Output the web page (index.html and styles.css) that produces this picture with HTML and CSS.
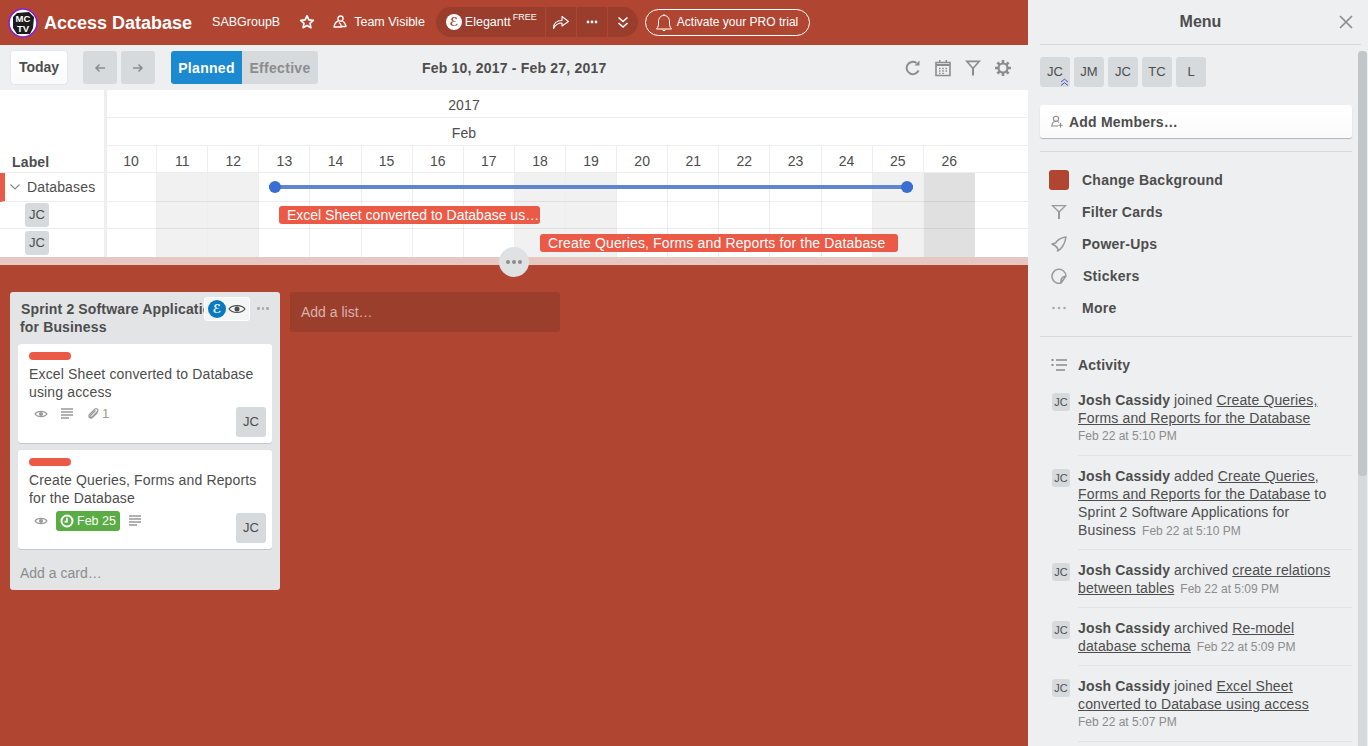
FILE: index.html
```html
<!DOCTYPE html>
<html lang="en">
<head>
  <meta charset="UTF-8" />
  <title>Access Database</title>
  <link rel="stylesheet" href="styles.css">
</head>
<body>
<div class="page">
  <div class="main">

    <div class="header">
      <svg class="logo" width="30" height="30" viewBox="0 0 30 30">
        <circle cx="15" cy="15" r="14" fill="#fff" stroke="#8a1fd8" stroke-width="1.6"/>
        <path d="M5 9 L9 5 L21 4 L26 9 L25 20 L22 26 L9 26 L5 20 Z" fill="#1c1c1c"/>
        <text x="15" y="14" class="logo-text">MC</text>
        <text x="15" y="24" class="logo-text">TV</text>
      </svg>
      <span class="board-title">Access Database</span>
      <span class="head-link team">SABGroupB</span>
      <svg class="star" width="16" height="16" viewBox="0 0 16 16"><path d="M8 1.8 L9.9 5.8 L14.3 6.3 L11 9.3 L11.9 13.7 L8 11.5 L4.1 13.7 L5 9.3 L1.7 6.3 L6.1 5.8 Z" fill="none" stroke="#fff" stroke-width="1.7" stroke-linejoin="round"/></svg>
      <svg class="people" width="14" height="14" viewBox="0 0 14 14"><g fill="none" stroke="#fff" stroke-width="1.3" stroke-linejoin="round"><circle cx="7.5" cy="3.6" r="2.6"/><path d="M5.5 6 C3 6.5 1.5 9 1 12 H8.5 C8.5 10 7.5 8.5 6 7.5"/><path d="M9.5 6 C11.5 7 12.5 9 13 11.5 H9"/></g></svg>
      <span class="head-link">Team Visible</span>

      <div class="pill">
        <div class="pill-seg pill-brand">
          <span class="e-mark">ℰ</span>
          <span>Elegantt</span><sup class="free">FREE</sup>
        </div>
        <div class="pill-seg pill-icon">
          <svg width="18" height="16" viewBox="0 0 18 16"><path d="M1.5 14.5 C1.5 9 4.5 6.5 10 6.5 V2.5 L16.5 7.5 L10 12 V9 C6 9 3.5 10.5 1.5 14.5 Z" fill="none" stroke="#fff" stroke-width="1.1" stroke-linejoin="round"/></svg>
        </div>
        <div class="pill-seg pill-icon">
          <svg width="12" height="4" viewBox="0 0 12 4"><circle cx="2" cy="2" r="1.4" fill="#fff"/><circle cx="6" cy="2" r="1.4" fill="#fff"/><circle cx="10" cy="2" r="1.4" fill="#fff"/></svg>
        </div>
        <div class="pill-seg pill-icon">
          <svg width="12" height="13" viewBox="0 0 12 13"><path d="M1.5 1.5 L6 5.5 L10.5 1.5 M1.5 7 L6 11 L10.5 7" fill="none" stroke="#fff" stroke-width="1.6"/></svg>
        </div>
      </div>

      <div class="pro-btn">
        <svg width="18" height="19" viewBox="0 0 18 19"><path d="M1.5 16 C3.5 14 3.5 12 3.5 9 C3.5 5 5.5 2.5 9 2.5 C12.5 2.5 14.5 5 14.5 9 C14.5 12 14.5 14 16.5 16 Z M7.5 16.5 C7.5 18 10.5 18 10.5 16.5 M9 1 V2.5" fill="none" stroke="#fff" stroke-width="1"/></svg>
        <span>Activate your PRO trial</span>
      </div>
    </div>

    <div class="toolbar">
      <div class="btn-today">Today</div>
      <div class="btn-nav"><svg width="12" height="10" viewBox="0 0 12 10"><path d="M11 5 H2 M5.5 1.5 L2 5 L5.5 8.5" fill="none" stroke="#8c8c8c" stroke-width="1.5"/></svg></div>
      <div class="btn-nav"><svg width="12" height="10" viewBox="0 0 12 10"><path d="M1 5 H10 M6.5 1.5 L10 5 L6.5 8.5" fill="none" stroke="#8c8c8c" stroke-width="1.5"/></svg></div>
      <div class="mode">
        <span class="mode-on">Planned</span>
        <span class="mode-off">Effective</span>
      </div>
      <div class="range">Feb 10, 2017 - Feb 27, 2017</div>
      <div class="tools">
        <svg width="18" height="18" viewBox="0 0 18 18"><path d="M14.5 11.5 A6.2 6.2 0 1 1 12.5 4" fill="none" stroke="#8c8c8c" stroke-width="2"/><path d="M10.5 6.5 H15.5 V1.5 Z" fill="#8c8c8c"/></svg>
        <svg width="18" height="18" viewBox="0 0 18 18"><path d="M2 3.5 H16 V16.5 H2 Z" fill="none" stroke="#8c8c8c" stroke-width="1.6"/><path d="M2 5 H16 V7 H2 Z M5 1 H6.5 V4 H5 Z M11.5 1 H13 V4 H11.5 Z" fill="#8c8c8c"/><path d="M5 9.5 H6.5 M8.2 9.5 H9.8 M11.5 9.5 H13 M5 12 H6.5 M8.2 12 H9.8 M11.5 12 H13 M5 14.3 H6.5 M8.2 14.3 H9.8" stroke="#8c8c8c" stroke-width="1.3"/></svg>
        <svg width="18" height="18" viewBox="0 0 18 18"><path d="M1 1.5 H17 L10 9.5 V16.5 H8 V9.5 Z M4.6 3.2 L9 8.2 L13.4 3.2 Z" fill="#8c8c8c" fill-rule="evenodd"/></svg>
        <svg width="18" height="18" viewBox="0 0 18 18"><circle cx="9" cy="9" r="4.5" fill="none" stroke="#8c8c8c" stroke-width="2.2"/><path d="M9 1 V4 M9 14 V17 M1 9 H4 M14 9 H17 M3.4 3.4 L5.5 5.5 M12.5 12.5 L14.6 14.6 M14.6 3.4 L12.5 5.5 M5.5 12.5 L3.4 14.6" stroke="#8c8c8c" stroke-width="2.6"/></svg>
      </div>
    </div>

    <div class="gantt">
      <div class="g-labels">
        <div class="g-label-head">Label</div>
        <div class="g-group">
          <svg width="12" height="8" viewBox="0 0 12 8"><path d="M1.5 1.5 L6 6 L10.5 1.5" fill="none" stroke="#8c8c8c" stroke-width="1.2"/></svg>
          <span>Databases</span>
        </div>
        <div class="g-member g-member-a"><span class="avatar av-24">JC</span></div>
        <div class="g-member"><span class="avatar av-24">JC</span></div>
      </div>
      <div class="g-chart">
        <div class="g-period"><span>2017</span></div>
        <div class="g-period"><span>Feb</span></div>
        <div class="g-days">
          <span>10</span><span>11</span><span>12</span><span>13</span><span>14</span><span>15</span><span>16</span><span>17</span><span>18</span>
          <span>19</span><span>20</span><span>21</span><span>22</span><span>23</span><span>24</span><span>25</span><span class="last">26</span>
        </div>
        <div class="g-body">
          <div class="g-cols">
            <i></i><i class="off"></i><i class="off"></i><i></i><i></i><i></i><i></i><i></i><i class="off"></i>
            <i class="off"></i><i></i><i></i><i></i><i></i><i></i><i class="off"></i><i class="off2"></i>
          </div>
          <div class="g-row g-row-1"></div>
          <div class="g-row g-row-2"></div>
          <div class="g-row g-row-3"></div>
          <div class="g-span"></div>
          <div class="g-bar g-bar-1">Excel Sheet converted to Database using access</div>
          <div class="g-bar g-bar-2">Create Queries, Forms and Reports for the Database</div>
        </div>
      </div>
    </div>

    <div class="resizer">
      <div class="grip"><b></b><b></b><b></b></div>
    </div>

    <div class="board">
      <div class="list">
        <div class="list-title">Sprint 2 Software Applications for Business</div>
        <div class="list-badge">
          <span class="e-mark e-blue">ℰ</span>
          <svg width="18" height="12" viewBox="0 0 18 12"><path d="M1 6 C4 1.5 14 1.5 17 6 C14 10.5 4 10.5 1 6 Z" fill="none" stroke="#4d4d4d" stroke-width="1.2"/><circle cx="9" cy="6" r="2.5" fill="#4d4d4d"/></svg>
        </div>
        <div class="list-more"><b></b><b></b><b></b></div>

        <div class="card">
          <div class="card-label"></div>
          <div class="card-title">Excel Sheet converted to Database using access</div>
          <div class="card-foot">
            <div class="badges">
              <svg class="b-eye" width="14" height="10" viewBox="0 0 14 10"><path d="M1 5 C3.5 1.5 10.5 1.5 13 5 C10.5 8.5 3.5 8.5 1 5 Z" fill="none" stroke="#999" stroke-width="1.2"/><circle cx="7" cy="5" r="2" fill="#999"/></svg>
              <svg class="b-desc" width="12" height="11" viewBox="0 0 12 11"><path d="M0 1 H12 M0 4 H12 M0 7 H12 M0 10 H8" stroke="#999" stroke-width="1.3"/></svg>
              <svg class="b-clip" width="12" height="13" viewBox="0 0 12 13"><path d="M10.5 5.5 L5.5 10.5 C3.5 12.5 0.5 9.5 2.5 7.5 L8 2 C9.5 0.5 12 3 10.5 4.5 L5 10 C4 11 2.5 9.5 3.5 8.5 L8.5 3.5" fill="none" stroke="#999" stroke-width="1.1"/></svg>
              <span class="b-count">1</span>
            </div>
            <span class="avatar av-30">JC</span>
          </div>
        </div>

        <div class="card">
          <div class="card-label"></div>
          <div class="card-title">Create Queries, Forms and Reports for the Database</div>
          <div class="card-foot">
            <div class="badges badges-due">
              <svg class="b-eye" width="14" height="10" viewBox="0 0 14 10"><path d="M1 5 C3.5 1.5 10.5 1.5 13 5 C10.5 8.5 3.5 8.5 1 5 Z" fill="none" stroke="#999" stroke-width="1.2"/><circle cx="7" cy="5" r="2" fill="#999"/></svg>
              <span class="b-due">
                <svg width="14" height="14" viewBox="0 0 14 14"><circle cx="7" cy="7" r="5.5" fill="none" stroke="#fff" stroke-width="2"/><path d="M7 3.8 V7.6 H4.5" fill="none" stroke="#fff" stroke-width="1.6"/></svg>
                Feb 25
              </span>
              <svg class="b-desc-2" width="12" height="11" viewBox="0 0 12 11"><path d="M0 1 H12 M0 4 H12 M0 7 H12 M0 10 H8" stroke="#999" stroke-width="1.3"/></svg>
            </div>
            <span class="avatar av-30">JC</span>
          </div>
        </div>

        <div class="add-card">Add a card…</div>
      </div>

      <div class="add-list">Add a list…</div>
    </div>
  </div>

  <div class="menu">
    <div class="menu-head">
      <span>Menu</span>
      <svg class="menu-close" width="14" height="14" viewBox="0 0 14 14"><path d="M1 1 L13 13 M13 1 L1 13" stroke="#8c8c8c" stroke-width="1.7"/></svg>
    </div>
    <div class="scroll-track"><div class="scroll-thumb"></div></div>

    <div class="members">
      <span class="avatar av-30 admin">JC<svg class="chevs" width="9" height="9" viewBox="0 0 9 9"><path d="M1 4 L4.5 1.2 L8 4 M1 7.5 L4.5 4.7 L8 7.5" fill="none" stroke="#4a4fc4" stroke-width="1"/></svg></span>
      <span class="avatar av-30">JM</span>
      <span class="avatar av-30">JC</span>
      <span class="avatar av-30">TC</span>
      <span class="avatar av-30">L</span>
    </div>

    <div class="add-members">
      <svg width="13" height="13" viewBox="0 0 13 13"><g fill="none" stroke="#8c8c8c" stroke-width="1.1"><circle cx="5" cy="3.8" r="2.6"/><path d="M3.5 6.5 C2 7 1 8.5 0.8 11 H7 M6.5 6.5 C7 6.7 7.5 7 8 7.5"/><path d="M9.5 7.8 V12.5 M7.2 10.2 H11.8"/></g></svg>
      <span>Add Members…</span>
    </div>

    <div class="menu-links">
      <div class="menu-link"><span class="swatch"></span><span>Change Background</span></div>
      <div class="menu-link">
        <svg width="16" height="16" viewBox="0 0 16 16"><path d="M0 1 H16 L9 8 V15 H7 V8 Z M3 2.2 L8 7 L13 2.2 Z" fill="#999" fill-rule="evenodd"/></svg>
        <span>Filter Cards</span>
      </div>
      <div class="menu-link">
        <svg width="16" height="16" viewBox="0 0 16 16"><path d="M15 1 C10 1.5 6.5 4 4.5 7 L1 8 L4.5 10 L7 13 L6.5 15 C10 13.5 14 8.5 15 1 Z M4.5 10 L6.5 11.5" fill="none" stroke="#999" stroke-width="1.5" stroke-linejoin="round"/></svg>
        <span>Power-Ups</span>
      </div>
      <div class="menu-link">
        <svg width="16" height="16" viewBox="0 0 16 16"><path d="M10 15 A7 7 0 1 1 15 8 Z M10 15 C9.5 11 11.5 8.5 15 8" fill="none" stroke="#999" stroke-width="1.5" stroke-linejoin="round"/></svg>
        <span class="shift-1">Stickers</span>
      </div>
      <div class="menu-link">
        <svg width="16" height="16" viewBox="0 0 16 16"><circle cx="2.5" cy="8" r="1.3" fill="#aaa"/><circle cx="8" cy="8" r="1.3" fill="#aaa"/><circle cx="13.5" cy="8" r="1.3" fill="#aaa"/></svg>
        <span>More</span>
      </div>
    </div>

    <div class="activity-head">
      <svg width="16" height="14" viewBox="0 0 16 14"><path d="M5 2 H16 M5 7 H16 M5 12 H14" stroke="#8c8c8c" stroke-width="1.7"/><path d="M0.5 2 H2.5 M0.5 7 H2.5" stroke="#8c8c8c" stroke-width="1.9"/></svg>
      <span>Activity</span>
    </div>

    <div class="entry">
      <span class="avatar av-18">JC</span>
      <div class="entry-body"><b>Josh Cassidy</b> joined <u>Create Queries, Forms and Reports for the Database</u> <time class="block">Feb 22 at 5:10 PM</time></div>
    </div>
    <div class="entry">
      <span class="avatar av-18">JC</span>
      <div class="entry-body"><b>Josh Cassidy</b> added <u>Create Queries, Forms and Reports for the Database</u> to Sprint 2 Software Applications for Business <time>Feb 22 at 5:10 PM</time></div>
    </div>
    <div class="entry">
      <span class="avatar av-18">JC</span>
      <div class="entry-body"><b>Josh Cassidy</b> archived <u>create relations between tables</u> <time>Feb 22 at 5:09 PM</time></div>
    </div>
    <div class="entry">
      <span class="avatar av-18">JC</span>
      <div class="entry-body"><b>Josh Cassidy</b> archived <u>Re-model database schema</u> <time>Feb 22 at 5:09 PM</time></div>
    </div>
    <div class="entry">
      <span class="avatar av-18">JC</span>
      <div class="entry-body"><b>Josh Cassidy</b> joined <u>Excel Sheet converted to Database using access</u> <time class="block">Feb 22 at 5:07 PM</time></div>
    </div>
  </div>
</div>
</body>
</html>
```

FILE: styles.css
```css
* {
  box-sizing: border-box;
}

body {
  margin: 0;
  height: 746px;
  overflow: hidden;
  font-family: "Liberation Sans", Arial, sans-serif;
  font-size: 14px;
  line-height: 18px;
  letter-spacing: .15px;
  color: #4d4d4d;
}

.page {
  display: flex;
  height: 746px;
}

.main {
  width: 1028px;
  display: flex;
  flex-direction: column;
  background: #b04632;
}

/* header */

.header {
  height: 45px;
  display: flex;
  align-items: center;
  color: #fff;
  font-size: 12.5px;
  letter-spacing: 0;
}

.logo {
  margin-left: 8px;
}

.logo-text {
  fill: #fff;
  font-size: 9.5px;
  font-weight: bold;
  text-anchor: middle;
}

.board-title {
  margin-left: 6px;
  font-size: 18px;
  font-weight: bold;
}

.head-link {
  margin-bottom: 2px;
}

.team {
  margin-left: 20px;
}

.star {
  margin-left: 19px;
  margin-bottom: 1px;
}

.people {
  margin-left: 18px;
  margin-right: 7px;
  margin-bottom: 2px;
}

.pill {
  margin-left: 11px;
  margin-bottom: 1px;
  height: 30px;
  display: flex;
  border-radius: 15px;
  background: #9a3d2c;
}

.pill-seg {
  display: flex;
  align-items: center;
  justify-content: center;
  border-left: 1px solid #b04632;
}

.pill-brand {
  width: 109px;
  border-left: 0;
  padding-left: 10px;
  justify-content: flex-start;
  gap: 3px;
}

.pill-icon {
  width: 31px;
}

.free {
  font-size: 9px;
  line-height: 9px;
  margin-left: -1px;
  align-self: flex-start;
  margin-top: 6px;
}

.e-mark {
  width: 16px;
  height: 16px;
  border-radius: 50%;
  background: #fff;
  color: #9a3d2c;
  font-family: "DejaVu Sans", sans-serif;
  font-size: 12px;
  font-style: italic;
  font-weight: bold;
  line-height: 16px;
  text-align: center;
}

.e-blue {
  width: 18px;
  height: 18px;
  line-height: 18px;
  background: #0a79bf;
  color: #fff;
}

.pro-btn {
  margin-left: 7px;
  margin-bottom: 1px;
  width: 165px;
  height: 27px;
  display: flex;
  align-items: center;
  gap: 4px;
  padding-left: 9px;
  border: 1px solid #fff;
  border-radius: 14px;
  font-size: 12px;
}

/* toolbar */

.toolbar {
  height: 45px;
  display: flex;
  align-items: center;
  background: #edeff0;
  padding-left: 11px;
  letter-spacing: 0;
}

.btn-today {
  width: 56px;
  height: 33px;
  background: linear-gradient(#fff, #fafafa);
  border-radius: 3px;
  box-shadow: 0 0 1px rgba(0, 0, 0, .35);
  font-weight: bold;
  line-height: 33px;
  text-align: center;
  margin-right: 16px;
}

.btn-nav {
  width: 34px;
  height: 33px;
  background: #d6dadc;
  border-radius: 3px;
  display: flex;
  align-items: center;
  justify-content: center;
  margin-right: 4px;
}

.mode {
  display: flex;
  margin-left: 12px;
  height: 33px;
  font-weight: bold;
  line-height: 35px;
  letter-spacing: .3px;
}

.mode-on {
  width: 71px;
  text-align: center;
  color: #fff;
  background: #1b8ad0;
  border-radius: 3px 0 0 3px;
}

.mode-off {
  width: 76px;
  text-align: center;
  color: #8c8c8c;
  background: #d6dadc;
  border-radius: 0 3px 3px 0;
}

.range {
  margin-left: 104px;
  font-weight: bold;
  letter-spacing: .2px;
}

.tools {
  margin-left: auto;
  margin-right: 16px;
  display: flex;
  gap: 12px;
}

/* gantt */

.gantt {
  height: 167px;
  display: flex;
  background: #fff;
}

.g-labels {
  width: 107px;
  border-right: 3px solid #eee;
}

.g-label-head {
  height: 83px;
  padding: 63px 0 0 12px;
  border-bottom: 1px solid #eee;
  font-weight: bold;
}

.g-group {
  height: 29px;
  display: flex;
  align-items: center;
  gap: 6px;
  padding-left: 4px;
  border-left: 5px solid #eb5a46;
  border-bottom: 1px solid #eee;
}

.g-member {
  height: 28px;
  padding: 2px 0 0 25px;
}

.g-member-a {
  height: 27px;
  padding-top: 1px;
  border-bottom: 1px solid #eee;
}

.g-member .avatar {
  display: block;
}

.g-chart {
  flex: 1;
}

.g-period {
  height: 28px;
  border-bottom: 1px solid #eee;
  line-height: 30px;
}

.g-period span {
  display: block;
  width: 714px;
  text-align: center;
}

.g-days {
  height: 27px;
  display: grid;
  grid-template-columns: repeat(17, 51.12px);
  margin-left: -1px;
  border-bottom: 1px solid #eee;
  letter-spacing: 0;
}

.g-days span {
  border-right: 1px solid #eee;
  text-align: center;
  line-height: 31px;
}

.g-days .last {
  border-right: 0;
}

.g-body {
  position: relative;
  height: 84px;
}

.g-cols {
  position: absolute;
  top: 0;
  bottom: 0;
  left: -1px;
  display: grid;
  grid-template-columns: repeat(17, 51.12px);
}

.g-cols i {
  border-right: 1px solid #eee;
}

.g-cols .off {
  background: #f1f1f1;
}

.g-cols .off2 {
  background: #e0e0e0;
  border-right: 0;
}

.g-row {
  position: relative;
  border-bottom: 1px solid rgba(0, 0, 0, .07);
}

.g-row-1 {
  height: 29px;
}

.g-row-2 {
  height: 27px;
}

.g-row-3 {
  height: 28px;
  border-bottom: 0;
}

.g-span {
  position: absolute;
  left: 162px;
  top: 12px;
  width: 644px;
  height: 4px;
  background: #5f86cf;
}

.g-span::before,
.g-span::after {
  content: "";
  position: absolute;
  top: -4px;
  width: 12px;
  height: 12px;
  border-radius: 50%;
  background: #3a6ed0;
}

.g-span::before {
  left: 0;
}

.g-span::after {
  right: 0;
}

.g-bar {
  position: absolute;
  height: 18px;
  padding-left: 8px;
  border-radius: 3px;
  background: #eb5a46;
  color: #fff;
  white-space: nowrap;
  overflow: hidden;
  text-overflow: ellipsis;
}

.g-bar-1 {
  left: 172px;
  top: 33px;
  width: 261px;
  letter-spacing: 0;
}

.g-bar-2 {
  left: 433px;
  top: 61px;
  width: 358px;
}

.resizer {
  position: relative;
  height: 8px;
  background: #e7c7c1;
}

.grip {
  position: absolute;
  left: 499px;
  top: -10px;
  width: 30px;
  height: 30px;
  border-radius: 50%;
  background: #dfe1e3;
  display: flex;
  align-items: center;
  justify-content: center;
  gap: 2px;
}

.grip b {
  width: 4px;
  height: 4px;
  border-radius: 50%;
  background: #8c8c8c;
}

/* board */

.board {
  flex: 1;
  display: flex;
  align-items: flex-start;
  gap: 10px;
  padding: 27px 0 0 10px;
}

.list {
  position: relative;
  width: 270px;
  height: 298px;
  padding: 8px 8px 0;
  background: #e2e4e6;
  border-radius: 3px;
}

.list-title {
  width: 228px;
  height: 36px;
  margin: 0 0 8px 2px;
  font-weight: bold;
  text-indent: 1px;
}

.list-badge {
  position: absolute;
  left: 194px;
  top: 5px;
  width: 46px;
  height: 24px;
  display: flex;
  align-items: center;
  gap: 2px;
  padding-left: 3px;
  background: rgba(244, 245, 246, .95);
  border: 1px solid #fff;
  border-radius: 3px;
}

.list-more {
  position: absolute;
  left: 247px;
  top: 15px;
  display: flex;
  gap: 2px;
}

.list-more b {
  width: 2.5px;
  height: 2.5px;
  border-radius: 50%;
  background: #aaa;
}

.card {
  position: relative;
  height: 99px;
  margin-bottom: 7px;
  padding: 8px 6px 0 11px;
  background: #fff;
  border-radius: 3px;
  box-shadow: 0 1px 0 #c4c9cc;
}

.card-label {
  width: 42px;
  height: 8px;
  border-radius: 4px;
  background: #eb5a46;
  margin-bottom: 5px;
}

.card-foot {
  display: flex;
  justify-content: space-between;
  align-items: flex-start;
}

.card-foot .avatar {
  margin-top: 6px;
}

.badges {
  display: flex;
  align-items: center;
  padding: 5px 0 0 5px;
  height: 20px;
  color: #999;
}

.badges-due {
  padding-top: 7px;
}

.b-desc {
  margin-left: 13px;
}

.b-clip {
  margin-left: 14px;
}

.b-count {
  margin-left: 3px;
  font-size: 13px;
}

.b-due {
  display: flex;
  align-items: center;
  gap: 3px;
  width: 64px;
  height: 20px;
  margin-left: 8px;
  padding-left: 4px;
  border-radius: 3px;
  background: #5aac44;
  color: #fff;
  font-size: 12.5px;
  letter-spacing: 0;
}

.b-desc-2 {
  margin-left: 9px;
}

.add-card {
  margin: 15px 0 0 2px;
  color: #8c8c8c;
  letter-spacing: 0;
}

.add-list {
  width: 270px;
  height: 40px;
  padding: 11px;
  background: #9b3e2c;
  border-radius: 3px;
  color: #d9b3ab;
  letter-spacing: 0;
}

/* avatars */

.avatar {
  display: inline-block;
  position: relative;
  background: #d6dadc;
  border-radius: 3px;
  text-align: center;
  color: #4d4d4d;
  letter-spacing: 0;
}

.av-30 {
  width: 30px;
  height: 30px;
  line-height: 30px;
  font-size: 13px;
}

.av-24 {
  width: 24px;
  height: 24px;
  line-height: 24px;
  font-size: 13px;
}

.av-18 {
  width: 18px;
  height: 18px;
  line-height: 18px;
  font-size: 11px;
}

.chevs {
  position: absolute;
  right: 1px;
  bottom: 0;
}

/* menu */

.menu {
  position: relative;
  width: 340px;
  height: 746px;
  overflow: hidden;
  padding: 0 16px 0 12px;
  background: #edeff0;
}

.menu-head {
  position: relative;
  height: 45px;
  margin-right: -9px;
  border-bottom: 1px solid #d6dadc;
  font-size: 16px;
  font-weight: bold;
  line-height: 44px;
  text-align: center;
  letter-spacing: 0;
}

.menu-close {
  position: absolute;
  right: 8px;
  top: 15px;
}

.scroll-track {
  position: absolute;
  right: 1px;
  top: 51px;
  bottom: 0;
  width: 9px;
  background: #d6dadc;
  border-radius: 4px 4px 0 0;
}

.scroll-thumb {
  height: 425px;
  background: #c1c7c9;
  border-radius: 4px;
}

.members {
  display: flex;
  gap: 4px;
  padding-top: 12px;
}

.add-members {
  display: flex;
  align-items: center;
  gap: 5px;
  height: 33px;
  margin-top: 18px;
  padding-left: 11px;
  background: linear-gradient(#fff, #fafafa);
  border-radius: 3px;
  box-shadow: 0 1px 1px rgba(0, 0, 0, .25);
  font-weight: bold;
  letter-spacing: .2px;
}

.menu-links {
  margin-top: 13px;
  padding: 12px 0 12px 9px;
  border-top: 1px solid #d6dadc;
  border-bottom: 1px solid #d6dadc;
  height: 186px;
}

.menu-link {
  display: flex;
  align-items: center;
  height: 32px;
  gap: 17px;
  font-weight: bold;
  letter-spacing: .25px;
}

.menu-link svg {
  margin-left: 2px;
  margin-right: -2px;
}

.shift-1 {
  margin-left: 1px;
}

.swatch {
  width: 20px;
  height: 20px;
  margin-right: -4px;
  border-radius: 3px;
  background: #b04632;
}

.activity-head {
  display: flex;
  align-items: center;
  gap: 11px;
  height: 20px;
  margin: 18px 0 5px;
  padding-left: 11px;
  font-weight: bold;
  letter-spacing: .2px;
}

.entry {
  position: relative;
  padding: 9px 0 0 38px;
}

.entry .avatar {
  position: absolute;
  left: 12px;
  top: 13px;
}

.entry-body {
  padding: 2px 12px 10px 0;
  border-bottom: 1px solid #e2e4e6;
}

time {
  margin-left: 2px;
  color: #8c8c8c;
  font-size: 12px;
  line-height: 14px;
  letter-spacing: 0;
}

time.block {
  display: block;
  margin-left: 0;
  line-height: 18px;
}
```
